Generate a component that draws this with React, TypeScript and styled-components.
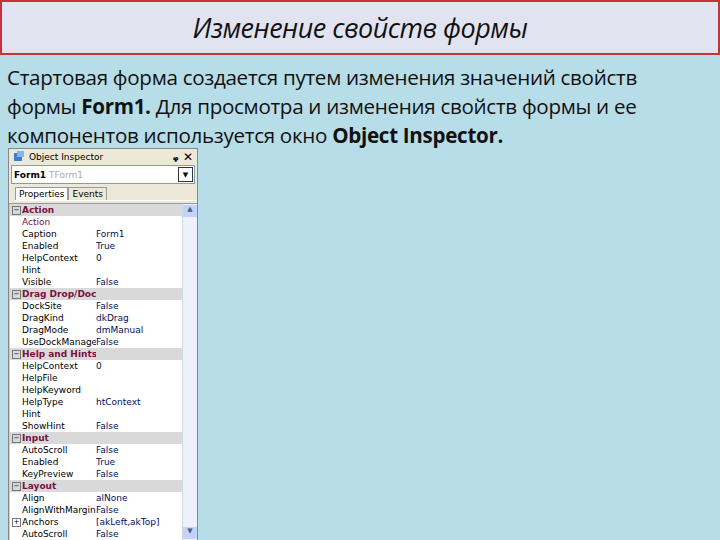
import React from "react";
import styled, { createGlobalStyle } from "styled-components";

const G = createGlobalStyle`
  html,body{margin:0;padding:0;background:#b7dde8;}
  body{width:720px;height:540px;overflow:hidden;}
`;
const Page = styled.div`width:720px;height:540px;display:flex;flex-direction:column;background:#b7dde8;`;
const Header = styled.div`
  height:55px;box-sizing:border-box;border:2px solid #c8303a;background:#e1e3f1;
  display:flex;align-items:center;justify-content:center;
  font-family:"Open Sans",sans-serif;font-style:italic;font-size:27px;color:#111;letter-spacing:-0.5px;
`;
const Para = styled.p`
  margin:8px 0 0 7px;font-family:"Open Sans",sans-serif;font-size:20.6px;line-height:29px;color:#111;height:87px;overflow:hidden;letter-spacing:-0.3px;white-space:nowrap;
  b{font-weight:700;}
`;
const Inspector = styled.div`
  margin:-2px 0 0 8px;width:188px;flex:1;background:#ece9d8;border:1px solid #888;border-bottom:none;
  display:flex;flex-direction:column;font-family:Tahoma,"DejaVu Sans",sans-serif;font-size:9px;color:#000;position:relative;
`;
const Title = styled.div`height:15px;display:flex;align-items:center;gap:4px;padding:0 4px;
  span{flex:1;} em{font-style:normal;font-size:12px;font-weight:bold;}`;
const Combo = styled.div`height:17px;margin:1px 2px;background:#fff;border:1px solid #7f9db9;display:flex;align-items:center;padding-left:2px;
  b{font-weight:bold;} i{font-style:normal;color:#aaa;margin-left:3px;flex:1;}`;
const Drop = styled.div`width:13px;height:13px;border:1px solid #333;margin-right:1px;display:flex;align-items:center;justify-content:center;font-size:7px;`;
const Tabs = styled.div`display:flex;height:13px;margin:2px 0 0 6px;border-bottom:1px solid #fff;`;
const Tab = styled.div<{ $active?: boolean }>`padding:0 3px;border:1px solid #999;border-bottom:none;background:${p => p.$active ? "#fff" : "#ece9d8"};line-height:12px;`;
const Grid = styled.div`flex:1;margin-top:2px;display:flex;background:#fff;border-top:1px solid #999;`;
const Rows = styled.div`flex:1;display:flex;flex-direction:column;min-width:0;`;
const Row = styled.div<{ $cat?: boolean }>`
  height:12px;display:grid;grid-template-columns:12px 74px 1fr;align-items:center;line-height:12px;
  background:${p => p.$cat ? "#d9d9d9" : "#fff"};
  color:${p => p.$cat ? "#7a1040" : "#000"};font-weight:${p => p.$cat ? "bold" : "normal"};
  border-left:1px solid #ccc;white-space:nowrap;overflow:hidden;
  & > span{overflow:hidden;}
`;
const Box = styled.span`width:7px;height:7px;border:1px solid #777;font-size:7px;line-height:7px;text-align:center;color:#000;font-weight:normal;margin-left:2px;`;
const Val = styled.span`color:#001060;`;
const Scroll = styled.div`width:14px;background:#eef1fb;border-left:1px solid #cdd;display:flex;flex-direction:column;justify-content:space-between;padding:1px 0;`;
const Arrow = styled.div`height:12px;background:#c3d3fd;font-size:7px;text-align:center;color:#4d6185;`;

type R = [string, string?, boolean?, string?];
const data: R[] = [
  ["Action", "", true], ["Action"], ["Caption", "Form1"], ["Enabled", "True"], ["HelpContext", "0"], ["Hint"], ["Visible", "False"],
  ["Drag Drop/Docking", "", true], ["DockSite", "False"], ["DragKind", "dkDrag"], ["DragMode", "dmManual"], ["UseDockManager", "False"],
  ["Help and Hints", "", true], ["HelpContext", "0"], ["HelpFile"], ["HelpKeyword"], ["HelpType", "htContext"], ["Hint"], ["ShowHint", "False"],
  ["Input", "", true], ["AutoScroll", "False"], ["Enabled", "True"], ["KeyPreview", "False"],
  ["Layout", "", true], ["Align", "alNone"], ["AlignWithMargins", "False"], ["Anchors", "[akLeft,akTop]", false, "+"], ["AutoScroll", "False"],
];

export default function App() {
  return (
    <Page>
      <G />
      <Header>Изменение свойств формы</Header>
      <Para>Стартовая форма создается путем изменения значений свойств<br />формы <b>Form1.</b> Для просмотра и изменения свойств формы и ее<br />компонентов используется окно <b>Object Inspector.</b></Para>
      <Inspector>
        <Title>
          <svg width="12" height="11" viewBox="0 0 12 11"><rect x="1" y="2" width="8" height="8" fill="#3a7bd5"/><rect x="4" y="0" width="7" height="6" fill="#7fb6f0"/></svg>
          <span>Object Inspector</span><em>ᵩ ✕</em>
        </Title>
        <Combo><b>Form1</b><i>TForm1</i><Drop>▼</Drop></Combo>
        <Tabs><Tab $active>Properties</Tab><Tab>Events</Tab></Tabs>
        <Grid>
          <Rows>
            {data.map(([n, v, c, b], i) => (
              <Row key={i} $cat={c}>
                {c ? <Box>−</Box> : b ? <Box>+</Box> : <span />}
                <span style={i === 1 ? { color: "#7a1040" } : undefined}>{n}</span>
                <Val>{v}</Val>
              </Row>
            ))}
          </Rows>
          <Scroll><Arrow>▲</Arrow><Arrow>▼</Arrow></Scroll>
        </Grid>
      </Inspector>
    </Page>
  );
}
